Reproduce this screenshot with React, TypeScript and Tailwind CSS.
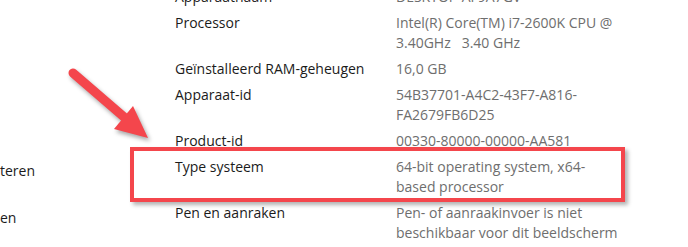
import React from "react";

const rows: { label: string; value: string[] }[] = [
  { label: "Apparaatnaam", value: ["DESKTOP-AF9A7GV"] },
  { label: "Processor", value: ["Intel(R) Core(TM) i7-2600K CPU @", "3.40GHz   3.40 GHz"] },
  { label: "Geïnstalleerd RAM-geheugen", value: ["16,0 GB"] },
  { label: "Apparaat-id", value: ["54B37701-A4C2-43F7-A816-", "FA2679FB6D25"] },
  { label: "Product-id", value: ["00330-80000-00000-AA581"] },
  { label: "Type systeem", value: ["64-bit operating system, x64-", "based processor"] },
  { label: "Pen en aanraken", value: ["Pen- of aanraakinvoer is niet", "beschikbaar voor dit beeldscherm"] },
];

function Arrow() {
  return (
    <svg
      className="absolute left-0 top-0 drop-shadow-[2px_3px_2px_rgba(0,0,0,0.35)]"
      width="170"
      height="150"
      viewBox="0 0 170 150"
    >
      <line x1="73" y1="73" x2="124" y2="117" stroke="#f4464c" strokeWidth="9" strokeLinecap="round" />
      <polygon points="133,106 148,138 114,129" fill="#f4464c" />
    </svg>
  );
}

export default function App() {
  return (
    <div
      className="relative w-[688px] h-[247px] overflow-hidden bg-white text-[14px] leading-[20px]"
      style={{ fontFamily: '"Open Sans", "Noto Sans", sans-serif' }}
    >
      <div className="flex">
        <div className="w-[175px] shrink-0 pt-[161px] text-[#1b1b1b]">
          <div>teren</div>
          <div className="mt-[27px]">en</div>
        </div>
        <div className="-mt-[13px] flex flex-col gap-[6px]">
          {rows.map((r) => (
            <div key={r.label} className="grid grid-cols-[221px_260px]">
              <div className="text-[#1b1b1b]">{r.label}</div>
              <div className="text-[#6e6e6e] whitespace-pre">
                {r.value.map((v) => (
                  <div key={v}>{v}</div>
                ))}
              </div>
            </div>
          ))}
        </div>
      </div>
      <div className="absolute left-[130px] top-[147px] w-[495px] h-[55px] border-4 border-[#f4464c] shadow-[3px_3px_4px_rgba(0,0,0,0.3)]" />
      <Arrow />
    </div>
  );
}
